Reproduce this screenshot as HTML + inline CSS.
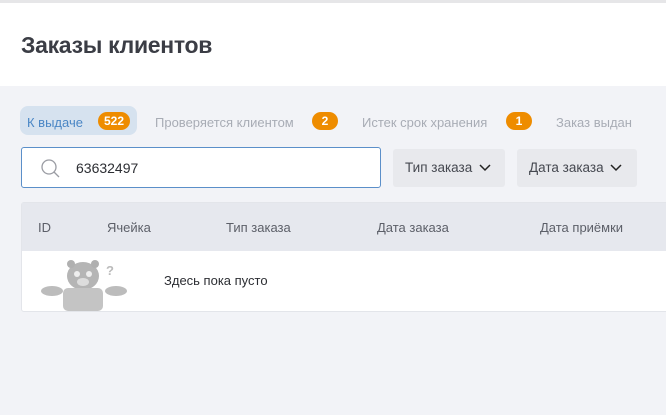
<!DOCTYPE html>
<html><head><meta charset="utf-8"><style>
*{margin:0;padding:0;box-sizing:border-box}
body{width:666px;height:415px;overflow:hidden;background:#f2f3f7;font-family:"Liberation Sans",sans-serif;position:relative}
.a{position:absolute;white-space:nowrap}
.hdr{left:0;top:0;width:666px;height:86px;background:#fff;border-top:3px solid #e6e6e8}
h1{position:absolute;left:21px;top:32px;font-size:23px;font-weight:bold;color:#3b3d45;letter-spacing:-0.3px}
.tab{font-size:13px;color:#a8acb5;top:115px}
.badge{background:#ee8c00;color:#fff;font-size:12px;font-weight:bold;border-radius:9px;height:18px;line-height:18px;text-align:center;top:112px}
.btn{background:#e8e9ed;border-radius:3px;height:38px;top:149px;font-size:13.5px;color:#454850;line-height:38px;padding-left:12px}
.th{top:220px;font-size:13px;color:#5c5f68}
</style></head><body>
<div class="a hdr"></div>
<h1>Заказы клиентов</h1>
<div class="a" style="left:20px;top:106px;width:117px;height:29px;background:#d6e2ef;border-radius:8px"></div>
<div class="a tab" style="left:27px;color:#4a86c5">К выдаче</div>
<div class="a badge" style="left:98px;width:32px">522</div>
<div class="a tab" style="left:155px">Проверяется клиентом</div>
<div class="a badge" style="left:312px;width:26px">2</div>
<div class="a tab" style="left:362px">Истек срок хранения</div>
<div class="a badge" style="left:506px;width:26px">1</div>
<div class="a tab" style="left:556px">Заказ выдан</div>
<div class="a" style="left:21px;top:147px;width:360px;height:41px;background:#fff;border:1px solid #5b8fc9;border-radius:3px"></div>
<svg class="a" style="left:40px;top:158px" width="22" height="22" viewBox="0 0 22 22"><circle cx="9" cy="9" r="7" fill="none" stroke="#9a9ca3" stroke-width="1.3"/><path d="M14 14l5 5" stroke="#9a9ca3" stroke-width="1.3"/></svg>
<div class="a" style="left:76px;top:160px;font-size:14px;color:#2c2e33">63632497</div>
<div class="a btn" style="left:393px;width:112px">Тип заказа <svg width="12" height="8" viewBox="0 0 12 8" style="margin-left:3px"><path d="M1 1l5 5 5-5" fill="none" stroke="#222" stroke-width="1.5"/></svg></div>
<div class="a btn" style="left:517px;width:120px">Дата заказа <svg width="12" height="8" viewBox="0 0 12 8" style="margin-left:3px"><path d="M1 1l5 5 5-5" fill="none" stroke="#222" stroke-width="1.5"/></svg></div>
<div class="a" style="left:21px;top:202px;width:650px;height:110px;background:#fff;border:1px solid #e3e5ea;border-radius:3px"></div>
<div class="a" style="left:22px;top:203px;width:650px;height:48px;background:#e6e8ee"></div>
<div class="a th" style="left:38px">ID</div>
<div class="a th" style="left:107px">Ячейка</div>
<div class="a th" style="left:226px">Тип заказа</div>
<div class="a th" style="left:377px">Дата заказа</div>
<div class="a th" style="left:540px">Дата приёмки</div>
<svg class="a" style="left:38px;top:258px" width="95" height="53" viewBox="0 0 95 53">
<ellipse cx="45" cy="18" rx="16" ry="14" fill="#b5b5b5"/>
<circle cx="33" cy="6" r="4" fill="#b0b0b0"/><circle cx="57" cy="6" r="4" fill="#b0b0b0"/>
<circle cx="39" cy="16" r="3" fill="#eee"/><circle cx="51" cy="16" r="3" fill="#eee"/>
<ellipse cx="45" cy="24" rx="6" ry="4" fill="#ddd"/>
<rect x="25" y="30" width="40" height="23" rx="5" fill="#c4c4c4"/>
<ellipse cx="14" cy="33" rx="11" ry="5" fill="#bcbcbc"/><ellipse cx="78" cy="33" rx="11" ry="5" fill="#bcbcbc"/>
<text x="68" y="17" font-size="13" font-weight="bold" fill="#bbb" font-family="Liberation Sans">?</text>
</svg>
<div class="a" style="left:164px;top:273px;font-size:13px;color:#2c2e33">Здесь пока пусто</div>
</body></html>
